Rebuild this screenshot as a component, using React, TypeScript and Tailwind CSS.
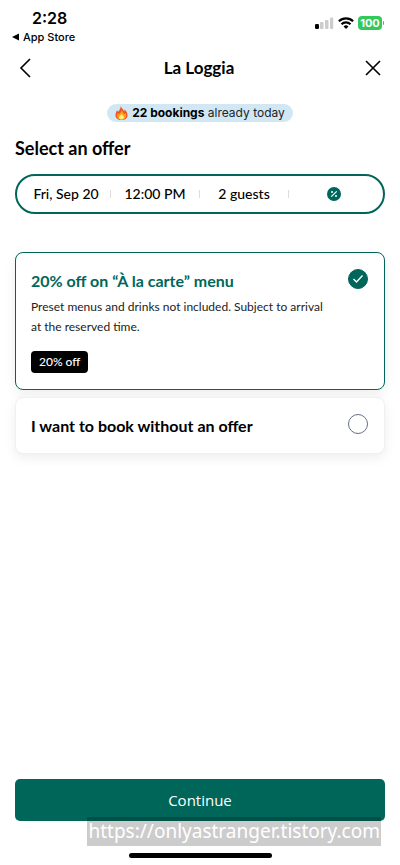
import { useState } from "react";

const offers = [
  {
    id: "discount",
    title: "20% off on “À la carte” menu",
    description: "Preset menus and drinks not included. Subject to arrival at the reserved time.",
    tag: "20% off",
  },
  { id: "none", title: "I want to book without an offer" },
];

function StatusBar() {
  return (
    <div className="flex h-11 items-start justify-between pt-2 pr-4 pl-3 font-['Inter',sans-serif]">
      <div>
        <div className="pl-5 text-base leading-5 font-semibold">2:28</div>
        <div className="flex items-center gap-1 text-[11px] leading-[18px] font-medium">
          <svg width="7" height="8" viewBox="0 0 7 8" aria-hidden="true">
            <path d="M7 .5v7L0 4z" />
          </svg>
          App Store
        </div>
      </div>
      <div className="flex items-center gap-1 pt-2">
        <svg width="20" height="14" viewBox="0 0 20 14" aria-hidden="true">
          <rect x="1" y="8" width="4" height="5" rx="1.2" />
          <rect x="6" y="6" width="3.5" height="7" rx="1" fill="#ccc" />
          <rect x="11" y="4" width="3.5" height="9" rx="1" fill="#ccc" />
          <rect x="16" y="1.5" width="3.2" height="11.5" rx="1" fill="#ccc" />
        </svg>
        <svg width="16" height="14" viewBox="0 0 16 14" fill="none" stroke="#000" strokeWidth="2.2" aria-hidden="true">
          <path d="M.9 5.3a10.2 10.2 0 0 1 14.2 0M3.5 8.2a6.4 6.4 0 0 1 9 0" />
          <path d="M8 12.9 5.6 10.5a3.5 3.5 0 0 1 4.8 0z" fill="#000" stroke="none" />
        </svg>
        <div className="flex items-center gap-px">
          <span className="flex h-[14px] w-6 items-center justify-center rounded bg-[#34c759] text-[11px] leading-none font-bold text-white">
            100
          </span>
          <span className="h-1 w-px rounded-r bg-[#34c759]" />
        </div>
      </div>
    </div>
  );
}

function Flame() {
  return (
    <svg width="13" height="14" viewBox="0 0 12 14" aria-hidden="true">
      <path d="M5.2 0c.5 2 3 3.500 3.400 5.600.5-.6.6-1.300.5-2C11 5.300 12 7.300 12 9.200 12 12 9.700 14 6 14S0 12 0 9.200C0 7 1 5.700 1.600 4.200c.5.500.7 1 .8 1.700C4 4.500 5.200 2.500 5.200 0z" fill="#f4511e" />
      <path d="M6.200 3.800c.3 2 2 2.800 2.400 4.500.6-.2.900-.8 1-1.500.9 1 1.200 2 1.100 3-.2 2.500-2 3.700-4.700 3.700S1.500 12 1.400 9.800c0-1.200.5-2 1-2.800.3.600.500.900 1 1.200C4.700 7 6 6 6.200 3.800z" fill="#ff9d1c" />
      <path d="M6.200 7.500c.2 1.300 2.200 2 2.200 3.900 0 1.300-1 2.100-2.400 2.100s-2.500-.8-2.500-2.100c0-1.600 2.200-2.200 2.700-3.900z" fill="#fff176" />
    </svg>
  );
}

export default function App() {
  const [selected, setSelected] = useState("discount");
  return (
    <div className="relative flex min-h-screen flex-col bg-white font-['Lato',sans-serif] text-black">
      <StatusBar />
      <header className="flex h-12 items-center justify-between pr-[17px] pl-[15px]">
        <button aria-label="Back" className="flex size-5 items-center justify-center">
          <svg width="12" height="20" viewBox="0 0 12 20" fill="none" stroke="#000" strokeWidth="1.6" aria-hidden="true">
            <path d="M11 1 2 10l9 9" />
          </svg>
        </button>
        <h1 className="text-[17px] leading-6 font-bold">La Loggia</h1>
        <button aria-label="Close" className="flex size-5 items-center justify-center">
          <svg width="16" height="16" viewBox="0 0 16 16" fill="none" stroke="#000" strokeWidth="1.6" aria-hidden="true">
            <path d="m1 1 14 14M15 1 1 15" />
          </svg>
        </button>
      </header>

      <main className="flex flex-1 flex-col px-[15px] pt-3">
        <p className="flex h-[18px] items-center gap-1 self-center rounded-full bg-[#d2e7f4] px-2 font-['Inter',sans-serif] text-xs whitespace-nowrap text-[#1c2429]">
          <Flame />
          <span>
            <strong className="font-bold text-black">22 bookings</strong> already today
          </span>
        </p>
        <h2 className="mt-[14px] text-lg leading-6 font-bold">Select an offer</h2>

        <div className="mt-3.5 grid h-10 grid-cols-4 items-center divide-x divide-[#dedede] rounded-3xl border-2 border-[#00665a] px-[5px] text-sm font-medium">
          <button className="h-2 leading-[8px] whitespace-nowrap">Fri, Sep 20</button>
          <button className="h-2 leading-[8px] whitespace-nowrap">12:00 PM</button>
          <button className="h-2 leading-[8px] whitespace-nowrap">2 guests</button>
          <button aria-label="Offers" className="flex h-2 items-center justify-center">
            <svg width="14" height="14" viewBox="0 0 14 14" className="shrink-0" aria-hidden="true">
              <circle cx="7" cy="7" r="7" fill="#00665a" />
              <path d="m4.300 9.700 5.400-5.400" stroke="#fff" strokeWidth="1.200" />
              <circle cx="5" cy="5" r="1" fill="#fff" />
              <circle cx="9" cy="9" r="1" fill="#fff" />
            </svg>
          </button>
        </div>

        <div className="mt-[38px] flex flex-col gap-[7px]">
          {offers.map((offer) => (
            <label
              key={offer.id}
              className="flex items-start justify-between rounded-lg border border-[#f0f0f0] bg-white px-[15px] py-4 shadow-[0_4px_12px_rgba(0,0,0,0.07)] has-checked:border-[#00665a]"
            >
              <span className="flex flex-1 flex-col items-start">
                <span className={`text-base leading-[23px] font-bold ${selected === offer.id ? "text-[#00665a]" : ""}`}>
                  {offer.title}
                </span>
                {offer.description && (
                  <span className="mt-[5px] max-w-[300px] text-xs leading-5 text-[#222]">{offer.description}</span>
                )}
                {offer.tag && (
                  <span className="mt-[14px] rounded bg-black px-2 text-xs leading-[22px] font-medium text-white">{offer.tag}</span>
                )}
              </span>
              <span className="mr-px grid size-5 shrink-0 place-items-center">
                <input
                  type="radio"
                  name="offer"
                  value={offer.id}
                  checked={selected === offer.id}
                  onChange={() => setSelected(offer.id)}
                  className="col-start-1 row-start-1 size-5 appearance-none rounded-full border-[1.5px] border-[#667085] bg-white checked:border-[#00665a] checked:bg-[#00665a]"
                />
                {selected === offer.id && (
                  <svg width="12" height="10" viewBox="0 0 12 10" fill="none" stroke="#fff" strokeWidth="1.400" className="pointer-events-none z-10 col-start-1 row-start-1" aria-hidden="true">
                    <path d="m1.500 5 3 3 6-6.500" />
                  </svg>
                )}
              </span>
            </label>
          ))}
        </div>

        <button className="mt-auto h-[42px] rounded-[5px] bg-[#00665a] font-['Open_Sans',sans-serif] text-[15px] font-medium text-white">
          Continue
        </button>
      </main>
      <div className="mt-8 mb-[7px] h-[5px] w-[143px] self-center rounded-full bg-black" />
      <div className="absolute right-[19px] bottom-[19px] bg-black/20 px-px font-['Noto_Sans',sans-serif] text-[19px] leading-[29px] text-white">
        https://onlyastranger.tistory.com
      </div>
    </div>
  );
}
